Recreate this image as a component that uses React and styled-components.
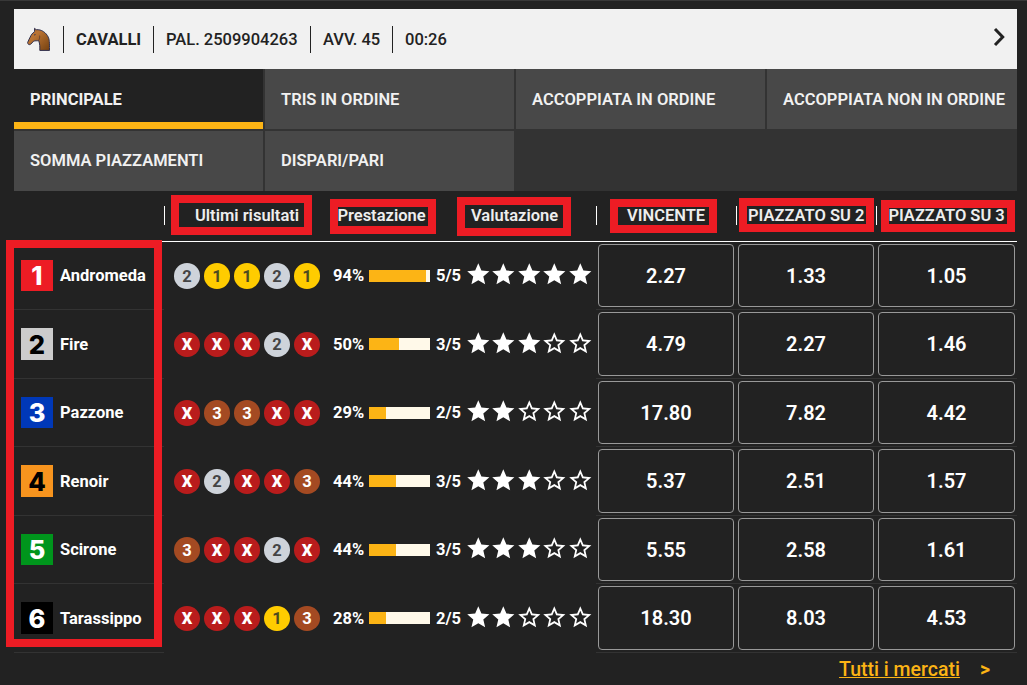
import React from "react"
import styled, { createGlobalStyle } from "styled-components"

const theme = {
    black: "#222222",
    darkGrey: "#333333",
    grey: "#484848",
    pale: "#f1f1f1",
    amber: "#fcb415",
    red: "#ed1c24"
}

const GlobalStyle = createGlobalStyle`
    * {
        box-sizing: border-box;
    }
    body {
        margin: 0;
        background: ${theme.black};
        color: #ffffff;
        font-family: Roboto, "Liberation Sans", sans-serif;
        font-size: 16.5px;
        overflow: hidden;
    }
`

const Page = styled.main`
    position: relative;
    width: 1027px;
    height: 685px;
    padding: 8px 10px 0 14px;
    border-top: 1px solid #383838;
`

const EventBar = styled.header`
    display: flex;
    align-items: center;
    height: 60px;
    padding: 0 11px 0 12px;
    background: ${theme.pale};
    color: ${theme.black};
`

const EventItem = styled.span`
    display: flex;
    align-items: center;
    height: 27px;
    width: ${props => props.$width}px;
    padding-left: 12px;
    border-left: 1px solid ${theme.black};
    font-weight: ${props => props.$bold ? 700 : 500};
    white-space: nowrap;
`

const HorseIcon = styled.svg`
    width: 25px;
    height: 25px;
    margin-right: 12px;
`

const Chevron = styled.svg`
    width: 13px;
    height: 20px;
    margin: 0 0 4px auto;
`

const Tabs = styled.nav`
    display: grid;
    grid-template-columns: 251px 251px 251px 250px;
    grid-template-rows: 60px 60px;
    row-gap: 2px;
    background: ${theme.darkGrey};
`

const Tab = styled.a`
    display: flex;
    align-items: center;
    margin-right: ${props => props.$last ? 0 : 2}px;
    padding: 0 0 ${props => props.$lower ? 2 : 0}px 16px;
    background: ${props => props.$active ? theme.black : theme.grey};
    box-shadow: ${props => props.$active ? `inset 0 -7px ${theme.amber}` : "none"};
    color: ${theme.pale};
    font-weight: ${props => props.$active ? 700 : 600};
    white-space: nowrap;
`

const Head = styled.div`
    display: grid;
    grid-template-columns: 150px 159px 137px 136px 140px 140px 141px;
    height: 50.9px;
    padding-top: 15px;
    border-bottom: 1px solid #ffffff;
`

const HeadCell = styled.div`
    height: 19px;
    padding-left: ${props => props.$indent}px;
    border-left: 1px solid ${props => props.$tick ? "#ffffff" : "transparent"};
    color: #eeeeee;
    font-weight: 600;
    line-height: 19px;
    white-space: nowrap;
`

const Row = styled.div`
    display: grid;
    grid-template-columns: 150px 159px 135px 138px 140px 140px 141px;
    height: 68.5px;
`

const Runner = styled.div`
    display: flex;
    align-items: center;
    padding-left: 7px;
    border-bottom: 1px solid ${theme.darkGrey};
    font-weight: 700;
`

const Number = styled.span`
    display: flex;
    align-items: center;
    justify-content: center;
    width: 32px;
    height: 31.5px;
    margin-right: 7px;
    background: ${props => props.$background};
    color: ${props => props.$color};
    font-family: Inter, Roboto, sans-serif;
    font-size: 25.5px;
    font-weight: 800;
`

const Results = styled.div`
    display: flex;
    align-items: center;
    gap: 4px;
    padding-left: 10px;
`

const resultColors = {
    1: ["#ffcc00", "#4b4a20"],
    2: ["#ced3da", "#444444"],
    3: ["#a44a22", "#ffffff"],
    X: ["#b91c1c", "#ffffff"]
}

const Result = styled.span`
    display: flex;
    align-items: center;
    justify-content: center;
    width: 26px;
    height: 25.5px;
    border-radius: 50%;
    background: ${props => resultColors[props.$value][0]};
    color: ${props => resultColors[props.$value][1]};
    font-weight: ${props => props.$value === "X" ? 900 : 700};
`

const Performance = styled.div`
    display: flex;
    align-items: center;
    padding: 0 0 0.5px 10px;
    font-weight: 700;
    white-space: nowrap;
`

const Percent = styled.span`
    flex: none;
    width: 35.88px;
`

const Bar = styled.span`
    flex: none;
    width: 60.65px;
    height: 12px;
    margin-right: 6.4px;
    background: #fff9e9;
`

const Fill = styled.span`
    display: block;
    height: 100%;
    background: ${theme.amber};
`

const Rating = styled.div`
    display: flex;
    align-items: center;
    padding: 0 0 3.2px 6.8px;
`

const StarIcon = styled.svg`
    flex: none;
    width: 26.6px;
    height: 26.6px;
    margin-right: -1.15px;
    fill: #ffffff;
`

const OddCell = styled.div`
    display: flex;
    padding: 2px;
    border-bottom: 1px solid ${theme.darkGrey};
`

const Odd = styled.button`
    flex: 1;
    padding: 0;
    background: transparent;
    border: 1px solid #999999;
    border-radius: 4px;
    color: #ffffff;
    font-family: inherit;
    font-size: 20px;
    font-weight: 600;
`

const Footer = styled.footer`
    display: flex;
    align-items: center;
    justify-content: flex-end;
    gap: 20px;
    height: 34px;
    padding-right: 27px;
    color: ${theme.amber};
    font-size: 19.5px;
    font-weight: 700;
`

const AllMarkets = styled.a`
    font-weight: 500;
    text-decoration: underline;
`

// red frame laid over the table
const Mark = styled.div`
    position: absolute;
    left: ${props => props.$x}px;
    top: ${props => props.$y - 1}px;
    width: ${props => props.$w}px;
    height: ${props => props.$h}px;
    border: 8px solid ${theme.red};
    pointer-events: none;
`

const tabs = [
    "PRINCIPALE",
    "TRIS IN ORDINE",
    "ACCOPPIATA IN ORDINE",
    "ACCOPPIATA NON IN ORDINE",
    "SOMMA PIAZZAMENTI",
    "DISPARI/PARI"
]

const runners = [
    { name: "Andromeda", bg: "#ed1c24", fg: "#ffffff", results: "21121", percent: 94, rating: 5, odds: ["2.27", "1.33", "1.05"] },
    { name: "Fire", bg: "#cccccc", fg: "#000000", results: "XXX2X", percent: 50, rating: 3, odds: ["4.79", "2.27", "1.46"] },
    { name: "Pazzone", bg: "#0038b8", fg: "#ffffff", results: "X33XX", percent: 29, rating: 2, odds: ["17.80", "7.82", "4.42"] },
    { name: "Renoir", bg: "#f7941e", fg: "#000000", results: "X2XX3", percent: 44, rating: 3, odds: ["5.37", "2.51", "1.57"] },
    { name: "Scirone", bg: "#00951c", fg: "#ffffff", results: "3XX2X", percent: 44, rating: 3, odds: ["5.55", "2.58", "1.61"] },
    { name: "Tarassippo", bg: "#000000", fg: "#ffffff", results: "XXX13", percent: 28, rating: 2, odds: ["18.30", "8.03", "4.53"] }
]

const marks = [
    [6, 240, 156, 407],
    [171, 195, 141, 40],
    [330, 199, 106, 35],
    [457, 197, 114, 39],
    [610, 199, 107, 34],
    [739, 198, 135, 34],
    [881, 200, 134, 32]
]

const Star = ({ full }) =>
    <StarIcon viewBox="0 0 24 24">
        {full
            ? <path d="M12 17.27 18.18 21l-1.64-7.03L22 9.24l-7.19-.61L12 2 9.19 8.63 2 9.24l5.46 4.73L5.82 21z" />
            : <path d="m22 9.24-7.19-.62L12 2 9.19 8.63 2 9.24l5.46 4.73L5.82 21 12 17.27 18.18 21l-1.63-7.03zM12 15.4l-3.76 2.27 1-4.28-3.32-2.88 4.38-.38L12 6.1l1.71 4.04 4.38.38-3.32 2.88 1 4.28z" />
        }
    </StarIcon>

const Horse = () =>
    <HorseIcon viewBox="0 0 25 25">
        <defs>
            <linearGradient id="coat" x1="0" y1="0" x2="1" y2="1">
                <stop offset="0.35" stopColor="#b97333" />
                <stop offset="1" stopColor="#74400f" />
            </linearGradient>
        </defs>
        <path
            d="M8.5 1.3 10.2 2.7C15.4 2.2 20.2 5.6 22.3 10.2 23.4 12.5 23.5 15 23.5 23.4H13.8C13.9 20.2 14 17 12.6 13.4 11.2 14.2 9.2 13.4 7.6 14.2L4.6 17.3C3.4 18.2 1.5 17.2 1.6 15.6 2.3 13.6 3.3 12 4.2 10.1 5.1 7.8 6.4 6.2 8.6 4.6z"
            fill="url(#coat)"
            stroke="#30304f"
            strokeWidth="1"
            strokeLinejoin="round"
        />
        <path d="M13.6 8.6C13.9 10.4 13.6 12 12.6 13.4" fill="none" stroke="#63402f" strokeWidth="0.9" />
        <path d="M8 8 9.6 7.6" fill="none" stroke="#30304f" strokeWidth="0.9" />
    </HorseIcon>

const App = () =>
    <Page>
        <GlobalStyle />
        <EventBar>
            <Horse />
            <EventItem $bold $width={90}>CAVALLI</EventItem>
            <EventItem $width={157}>PAL. 2509904263</EventItem>
            <EventItem $width={82}>AVV. 45</EventItem>
            <EventItem $width={82}>00:26</EventItem>
            <Chevron viewBox="0 0 13 20">
                <path d="M2 2 9.7 10 2 18" fill="none" stroke={theme.black} strokeWidth="3" />
            </Chevron>
        </EventBar>
        <Tabs>
            {tabs.map((tab, i) =>
                <Tab key={tab} $active={i === 0} $last={i === 3} $lower={i > 3}>{tab}</Tab>
            )}
        </Tabs>
        <Head>
            <div />
            <HeadCell $tick $indent={30}>Ultimi risultati</HeadCell>
            <HeadCell $indent={13.4}>Prestazione</HeadCell>
            <HeadCell $indent={10}>Valutazione</HeadCell>
            <HeadCell $tick $indent={30}>VINCENTE</HeadCell>
            <HeadCell $tick $indent={11}>PIAZZATO SU 2</HeadCell>
            <HeadCell $tick $indent={11.4}>PIAZZATO SU 3</HeadCell>
        </Head>
        {runners.map((runner, i) =>
            <Row key={runner.name}>
                <Runner>
                    <Number $background={runner.bg} $color={runner.fg}>{i + 1}</Number>
                    {runner.name}
                </Runner>
                <Results>
                    {runner.results.split("").map((value, j) =>
                        <Result key={j} $value={value}>{value}</Result>
                    )}
                </Results>
                <Performance>
                    <Percent>{runner.percent}%</Percent>
                    <Bar><Fill style={{ width: `${runner.percent}%` }} /></Bar>
                    {runner.rating}/5
                </Performance>
                <Rating>
                    {[1, 2, 3, 4, 5].map(n => <Star key={n} full={n <= runner.rating} />)}
                </Rating>
                {runner.odds.map((odd, j) =>
                    <OddCell key={j}><Odd>{odd}</Odd></OddCell>
                )}
            </Row>
        )}
        <Footer>
            <AllMarkets>Tutti i mercati</AllMarkets>
            <span>&gt;</span>
        </Footer>
        {marks.map(([x, y, w, h]) =>
            <Mark key={x} $x={x} $y={y} $w={w} $h={h} />
        )}
    </Page>

export default App
